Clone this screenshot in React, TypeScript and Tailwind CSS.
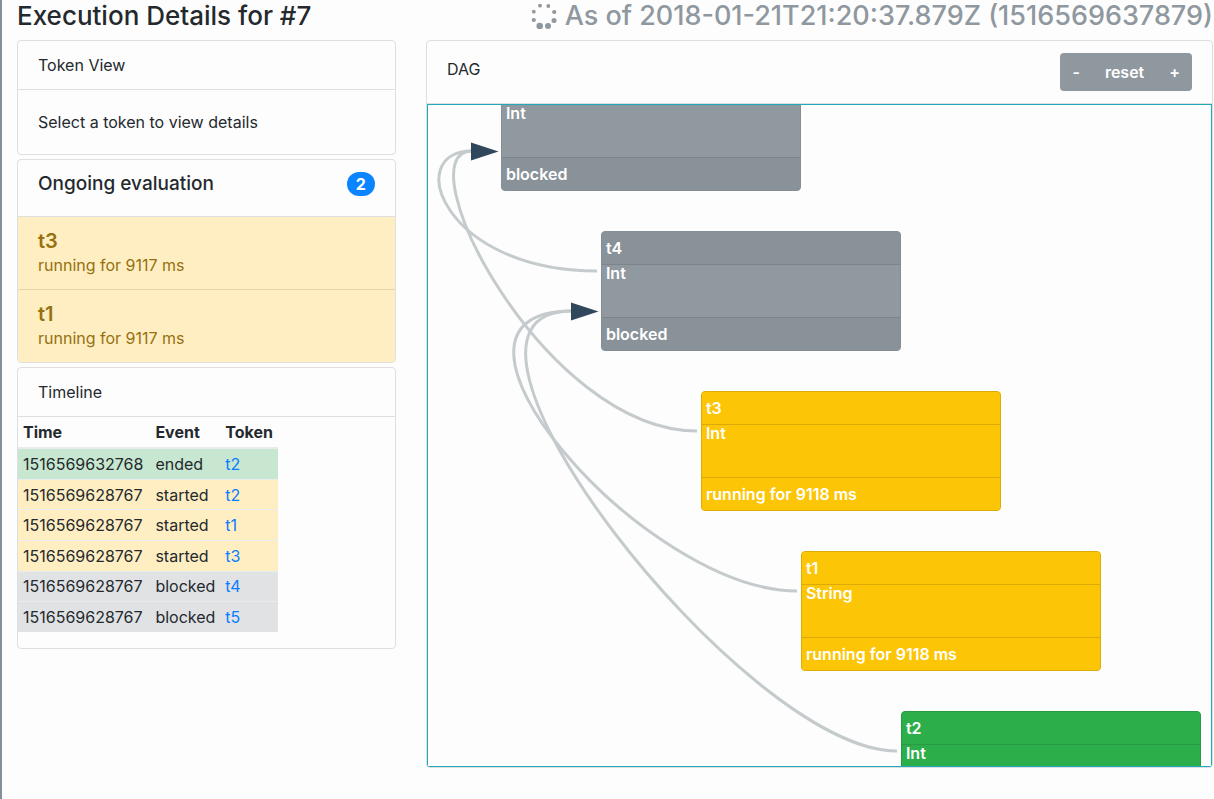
import type { ReactNode } from "react";

type Status = "blocked" | "running" | "ended";

const ongoing = [
  { token: "t3", text: "running for 9117 ms" },
  { token: "t1", text: "running for 9117 ms" },
];

const timeline = [
  { time: "1516569632768", event: "ended", token: "t2", row: "bg-[#c7e7d0]" },
  { time: "1516569628767", event: "started", token: "t2", row: "bg-[#ffeec2]" },
  { time: "1516569628767", event: "started", token: "t1", row: "bg-[#ffeec2]" },
  { time: "1516569628767", event: "started", token: "t3", row: "bg-[#ffeec2]" },
  { time: "1516569628767", event: "blocked", token: "t4", row: "bg-[#e0e2e4]" },
  { time: "1516569628767", event: "blocked", token: "t5", row: "bg-[#e0e2e4]" },
];

const nodes: { id: string; type: string; text: string; status: Status; x: number; y: number }[] = [
  { id: "t5", type: "Int", text: "blocked", status: "blocked", x: 73, y: -34 },
  { id: "t4", type: "Int", text: "blocked", status: "blocked", x: 173, y: 126 },
  { id: "t3", type: "Int", text: "running for 9118 ms", status: "running", x: 273, y: 286 },
  { id: "t1", type: "String", text: "running for 9118 ms", status: "running", x: 373, y: 446 },
  { id: "t2", type: "Int", text: "", status: "ended", x: 473, y: 606 },
];

const nodeColors: Record<Status, { box: string; bar: string }> = {
  blocked: { box: "border-[#858e95] bg-[#9098a0]", bar: "border-[#7b848b] bg-[#8a9299]" },
  running: { box: "border-[#dfac07] bg-[#fcc505]", bar: "border-[#dcaa08] bg-[#fcc505]" },
  ended: { box: "border-[#289a44] bg-[#2cae4b]", bar: "border-[#289a44] bg-[#2cae4b]" },
};

const links = [
  { from: [169, 166], to: [44, 46] },
  { from: [269, 326], to: [44, 46] },
  { from: [369, 486], to: [144, 206] },
  { from: [469, 646], to: [144, 206] },
];

function Card({ title, children }: { title: ReactNode; children: ReactNode }) {
  return (
    <section className="overflow-hidden rounded border border-[#dfdfdf]">
      <div className="flex items-start justify-between border-b border-[#dfdfdf] px-5 py-3">{title}</div>
      {children}
    </section>
  );
}

function Spinner() {
  return (
    <svg width="26" height="26" viewBox="0 0 26 26" fill="#8f989f" aria-hidden="true">
      <circle cx="9" cy="2.700" r="1.900" />
      <circle cx="17.300" cy="3" r="1.900" />
      <circle cx="2.800" cy="8.700" r="1.900" />
      <circle cx="23.200" cy="9" r="2.100" />
      <circle cx="2.800" cy="17" r="2.100" />
      <circle cx="23" cy="17.400" r="2.500" />
      <circle cx="8.700" cy="23" r="3.300" />
      <circle cx="17" cy="23" r="3" />
    </svg>
  );
}

function Dag() {
  return (
    <div className="relative h-[663px] overflow-hidden border border-[#1fa9bb]">
      <svg className="absolute inset-0 h-full w-full" aria-hidden="true">
        {links.map(({ from, to }) => (
          <path
            key={from[0]}
            d={`M${from[0]} ${from[1]} C${from[0] - 154} ${from[1]} ${-26} ${to[1]} ${to[0]} ${to[1]}`}
            fill="none"
            stroke="#c5cbcd"
            strokeWidth="3"
          />
        ))}
        <path d="M43 37.5 L70.500 46.500 L43 55.500 Z" fill="#31475c" />
        <path d="M143 197.500 L170.500 206.500 L143 215.500 Z" fill="#31475c" />
      </svg>
      {nodes.map((n) => (
        <article
          key={n.id}
          className={`absolute flex h-[120px] w-[300px] flex-col overflow-hidden rounded border font-semibold text-white ${nodeColors[n.status].box}`}
          style={{ left: n.x, top: n.y }}
        >
          <div className={`h-[33px] border-b px-1 pt-1 leading-6 ${nodeColors[n.status].bar}`}>
            {n.y >= 0 && n.id}
          </div>
          <div className="flex-1 px-1 leading-4">{n.type}</div>
          <div className={`h-[33px] border-t px-1 pt-1 leading-6 ${nodeColors[n.status].bar}`}>{n.text}</div>
        </article>
      ))}
    </div>
  );
}

export default function App() {
  return (
    <div className="min-h-screen overflow-hidden border-l-2 border-[#858f99] bg-[#fdfdfd] pr-px pl-[15px] font-['Inter',sans-serif] text-base text-[#24292e]">
      <header className="flex h-10 items-start justify-between whitespace-nowrap leading-8">
        <h1 className="text-[26px] leading-8 font-medium">Execution Details for #7</h1>
        <h2 className="flex items-center gap-2 text-[27px] leading-8 font-medium text-[#8f989f]">
          <Spinner />
          As of 2018-01-21T21:20:37.879Z (1516569637879)
        </h2>
      </header>
      <main className="grid grid-cols-[13fr_27fr] items-start gap-[30px]">
        <div className="flex flex-col gap-1">
          <Card title={<h3>Token View</h3>}>
            <p className="p-5">Select a token to view details</p>
          </Card>
          <Card
            title={
              <>
                <h3 className="mb-2 text-[19px] leading-6 font-medium">Ongoing evaluation</h3>
                <span className="rounded-full bg-[#0a84ff] px-[9px] leading-6 font-bold text-white">2</span>
              </>
            }
          >
            <ul className="divide-y divide-[#e5d6a9] bg-[#ffeec2] text-[#957110]">
              {ongoing.map((o) => (
                <li key={o.token} className="px-5 py-3">
                  <h4 className="text-xl leading-6 font-semibold">{o.token}</h4>
                  <p className="leading-6">{o.text}</p>
                </li>
              ))}
            </ul>
          </Card>
          <Card title={<h3>Timeline</h3>}>
            <table className="mb-4 h-[215px] w-[260px] border-collapse text-left">
              <thead>
                <tr className="border-b-2 border-[#e9ecef]">
                  <th className="w-[136px] px-[5px] py-[3px] font-bold">Time</th>
                  <th className="px-[5px] py-[3px] font-bold">Event</th>
                  <th className="px-[5px] py-[3px] font-bold">Token</th>
                </tr>
              </thead>
              <tbody>
                {timeline.map((r) => (
                  <tr key={r.event + r.token} className={`border-t border-[#e9ecef] ${r.row}`}>
                    <td className="px-[5px] py-0.5">{r.time}</td>
                    <td className="px-[5px] py-0.5">{r.event}</td>
                    <td className="px-[5px] py-0.5">
                      <a href={`#${r.token}`} className="text-[#0a7cff]">
                        {r.token}
                      </a>
                    </td>
                  </tr>
                ))}
              </tbody>
            </table>
          </Card>
        </div>
        <Card
          title={
            <>
              <h3 className="pt-1">DAG</h3>
              <div className="flex overflow-hidden rounded bg-[#8f989f] font-semibold text-white">
                <button className="px-3 py-[7px]">-</button>
                <button className="px-[13px] py-[7px]">reset</button>
                <button className="px-3 py-[7px]">+</button>
              </div>
            </>
          }
        >
          <Dag />
        </Card>
      </main>
    </div>
  );
}
